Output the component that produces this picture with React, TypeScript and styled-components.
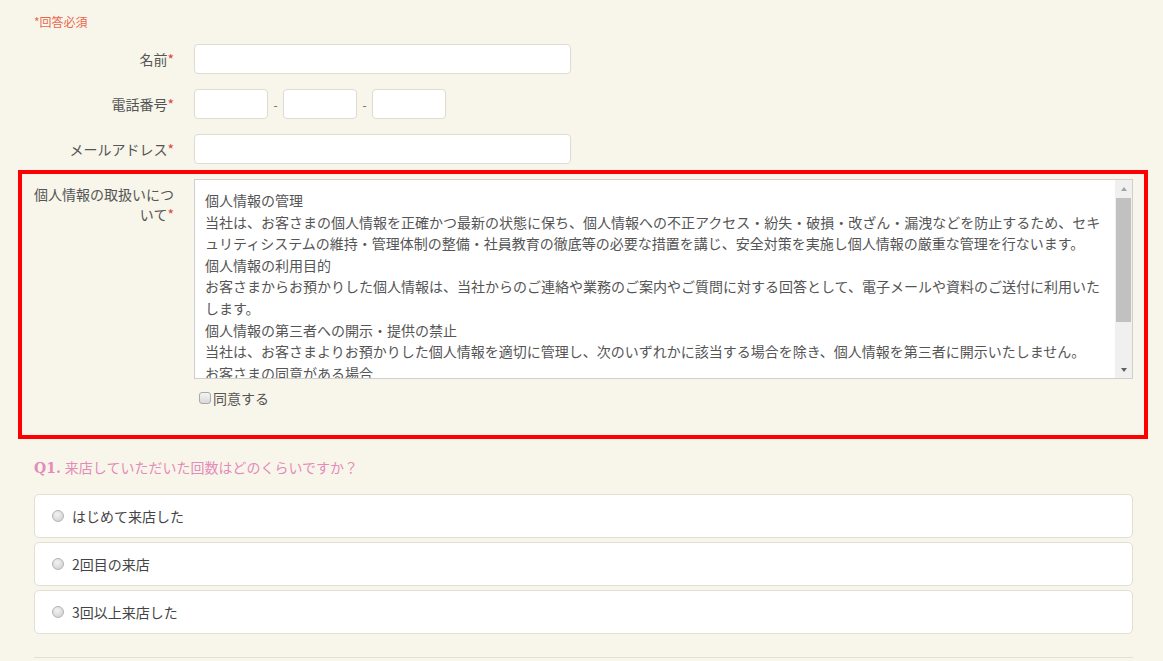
import styled, { createGlobalStyle } from 'styled-components';

const GlobalStyle = createGlobalStyle`
  html, body {
    margin: 0;
    padding: 0;
    overflow: hidden;
    background: #f8f6ea;
  }
  body {
    font-family: "Noto Sans CJK JP", "Noto Sans", "Liberation Sans", sans-serif;
    font-size: 14px;
    color: #555;
  }
`;

const Page = styled.div`
  padding: 13px 30px 0 34px;
`;

const RequiredNote = styled.div`
  font-size: 12px;
  line-height: 18px;
  color: #e8684f;
  margin-bottom: 13px;
`;

const Row = styled.div<{ $last?: boolean }>`
  display: grid;
  grid-template-columns: 140px 1fr;
  column-gap: 20px;
  margin-bottom: ${(p) => (p.$last ? '0' : '15px')};
`;

const Label = styled.label`
  text-align: right;
  padding-top: 5px;
  line-height: 20px;
  color: #555;
`;

const Star = styled.span`
  color: #e0453a;
`;

const TextInput = styled.input<{ $width?: number }>`
  box-sizing: border-box;
  width: ${(p) => (p.$width ? `${p.$width}px` : '377px')};
  height: 30px;
  border: 1px solid #dedbd1;
  border-radius: 4px;
  background: #fff;
  outline: none;
  padding: 0 8px;
  font: inherit;
`;

const PhoneGroup = styled.div`
  display: flex;
  align-items: center;
  gap: 4px;
`;

const Dash = styled.span`
  color: #666;
  font-size: 12px;
  width: 7px;
  text-align: center;
`;

const PolicyBox = styled.div`
  margin: 6px -15px 0 -16px;
  border: 4px solid #ff0000;
  padding: 5px 11px 27px 12px;
`;

const PolicyFrame = styled.div`
  box-sizing: border-box;
  display: flex;
  height: 200px;
  border: 1px solid #cfcfcf;
  background: #fff;
`;

const PolicyText = styled.textarea`
  box-sizing: border-box;
  flex: 1;
  min-width: 0;
  height: 100%;
  resize: none;
  border: none;
  background: #fff;
  padding: 10px 10px 0 10px;
  font: inherit;
  font-size: 14px;
  line-height: 21.6px;
  color: #555;
  outline: none;
  line-break: loose;
  overflow: hidden;
`;

const ScrollBar = styled.div`
  width: 17px;
  display: flex;
  flex-direction: column;
  background: #f0f0f0;
`;

const ScrollArrow = styled.div<{ $down?: boolean }>`
  height: 17px;
  display: flex;
  align-items: center;
  justify-content: center;

  &::before {
    content: '';
    width: 0;
    height: 0;
    border-left: 3.5px solid transparent;
    border-right: 3.5px solid transparent;
    ${(p) =>
      p.$down
        ? 'border-top: 4px solid #606060;'
        : 'border-bottom: 4px solid #a3a3a3;'}
  }
`;

const ScrollTrack = styled.div`
  flex: 1;
  padding: 1px 1px 0;
`;

const ScrollThumb = styled.div`
  height: 124px;
  background: #c1c1c1;
`;

const AgreeLine = styled.label`
  display: flex;
  align-items: center;
  gap: 2px;
  margin-top: 9px;
  padding-left: 5px;
  line-height: 20px;
  color: #555;
`;

const CheckBox = styled.input`
  appearance: none;
  margin: 0;
  width: 12px;
  height: 12px;
  border: 1px solid #a9a9a9;
  border-radius: 3px;
  background: linear-gradient(#f4f4f4, #d9d9d9);
`;

const Question = styled.div`
  margin-top: 18px;
  margin-bottom: 16px;
  line-height: 20px;
  color: #e48bb9;
`;

const QNum = styled.span`
  font-family: "DejaVu Serif", "Liberation Serif", serif;
  font-weight: bold;
  font-size: 14px;
  margin-right: 4px;
`;

const Choices = styled.div`
  display: flex;
  flex-direction: column;
  gap: 4px;
`;

const Choice = styled.label`
  box-sizing: border-box;
  height: 44px;
  display: flex;
  align-items: center;
  gap: 8px;
  padding-left: 17px;
  background: #fff;
  border: 1px solid #e2dfd5;
  border-radius: 5px;
  color: #444;
`;

const Radio = styled.input`
  appearance: none;
  margin: 0;
  width: 12px;
  height: 12px;
  border: 1px solid #b3b3b3;
  border-radius: 50%;
  background: radial-gradient(circle at 40% 35%, #f2f2f2, #cdcdcd);
`;

const NextBlock = styled.div`
  margin-top: 23px;
  height: 20px;
  border-top: 1px solid #e2dfd5;
`;

const policy = [
  '個人情報の管理',
  '当社は、お客さまの個人情報を正確かつ最新の状態に保ち、個人情報への不正アクセス・紛失・破損・改ざん・漏洩などを防止するため、セキュリティシステムの維持・管理体制の整備・社員教育の徹底等の必要な措置を講じ、安全対策を実施し個人情報の厳重な管理を行ないます。',
  '個人情報の利用目的',
  'お客さまからお預かりした個人情報は、当社からのご連絡や業務のご案内やご質問に対する回答として、電子メールや資料のご送付に利用いたします。',
  '個人情報の第三者への開示・提供の禁止',
  '当社は、お客さまよりお預かりした個人情報を適切に管理し、次のいずれかに該当する場合を除き、個人情報を第三者に開示いたしません。',
  'お客さまの同意がある場合',
  'お客さまが希望されるサービスを行なうために当社が業務を委託する業者に対して開示する場合',
  '法令に基づき開示することが必要である場合',
  '安全対策',
  '当社は、個人情報の正確性及び安全性確保のために、セキュリティに万全の対策を講じています。',
].join('\n');

const choices = ['はじめて来店した', '2回目の来店', '3回以上来店した'];

const App = () => {
  return (
    <Page>
      <GlobalStyle />
      <RequiredNote>*回答必須</RequiredNote>
      <Row>
        <Label>
          名前<Star>*</Star>
        </Label>
        <TextInput type='text' />
      </Row>
      <Row>
        <Label>
          電話番号<Star>*</Star>
        </Label>
        <PhoneGroup>
          <TextInput type='text' $width={74} />
          <Dash>-</Dash>
          <TextInput type='text' $width={74} />
          <Dash>-</Dash>
          <TextInput type='text' $width={74} />
        </PhoneGroup>
      </Row>
      <Row $last>
        <Label>
          メールアドレス<Star>*</Star>
        </Label>
        <TextInput type='text' />
      </Row>
      <PolicyBox>
        <Row $last>
          <Label>
            個人情報の取扱いについて<Star>*</Star>
          </Label>
          <div>
            <PolicyFrame>
              <PolicyText readOnly defaultValue={policy} />
              <ScrollBar>
                <ScrollArrow />
                <ScrollTrack>
                  <ScrollThumb />
                </ScrollTrack>
                <ScrollArrow $down />
              </ScrollBar>
            </PolicyFrame>
            <AgreeLine>
              <CheckBox type='checkbox' />
              同意する
            </AgreeLine>
          </div>
        </Row>
      </PolicyBox>
      <Question>
        <QNum>Q1.</QNum>来店していただいた回数はどのくらいですか？
      </Question>
      <Choices>
        {choices.map((c, i) => (
          <Choice key={i}>
            <Radio type='radio' name='q1' />
            {c}
          </Choice>
        ))}
      </Choices>
      <NextBlock />
    </Page>
  );
};
export default App;
